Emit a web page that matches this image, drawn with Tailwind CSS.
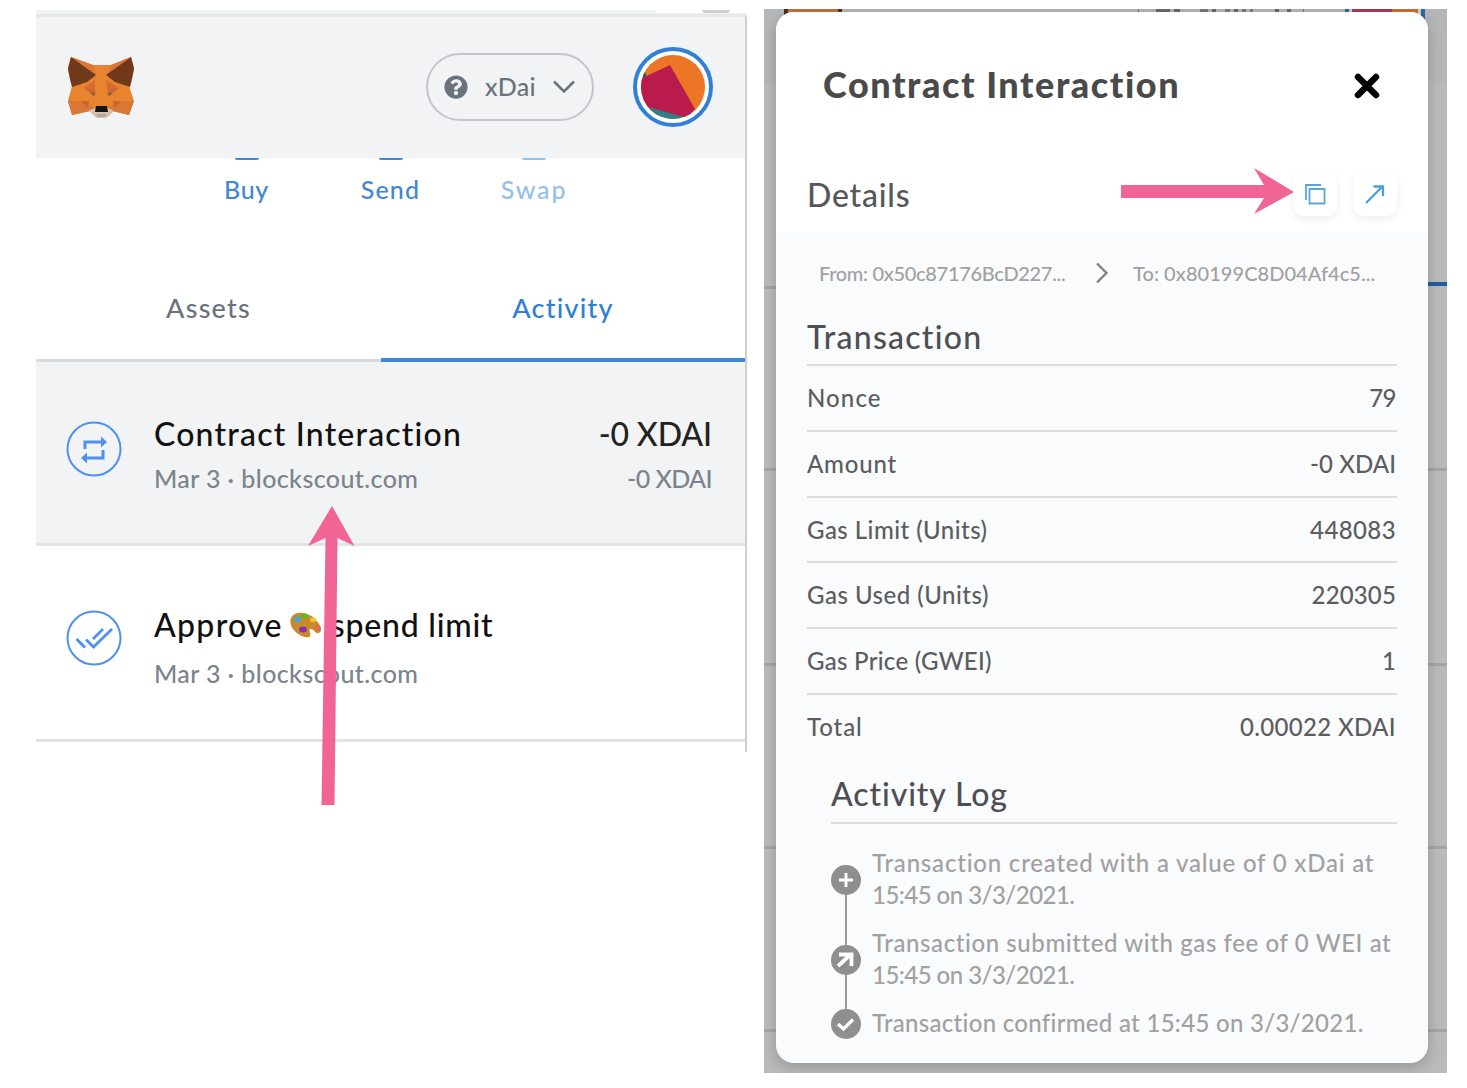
<!DOCTYPE html>
<html lang="en">
<head>
<meta charset="utf-8">
<title>Wallet activity</title>
<script src="https://cdn.jsdelivr.net/npm/@tailwindcss/browser@4"></script>
</head>
<body class="relative flex h-[1088px] w-[1467px] overflow-hidden bg-white font-['Lato','Noto_Sans',sans-serif] whitespace-nowrap">

<!-- Wallet popup -->
<main class="relative mt-[10px] ml-9 h-[742px] w-[711px] shrink-0">
  <div class="flex h-1 w-full bg-[#f1f2f2]"><div class="ml-[620px] h-[3px] w-[91px] overflow-hidden bg-white"><div class="ml-[46px] h-[3px] w-7 rounded-b-full bg-[#cfcfcf]"></div></div></div>
  <div class="h-[3px] w-full bg-[#e6e8e8]"></div>
  <div class="h-[735px] border-r-2 border-[#cfcfd0]">
    <header class="flex h-[141px] items-center bg-[#f2f3f4] pb-[2px] pl-[31px]">
      <svg class="h-[64px] w-[68px]" viewBox="0 0 68 64">
        <path fill="#e8832f" d="M4 2 26 10H44L64 2 67 16 62 31 67 46 62 60 46 56 42 61H28L23 56 5 60 1 46 5 31 1 16Z"/>
        <path fill="#d97735" d="M4 2 26 10 29 20ZM64 2 44 10 40 20ZM1 46H20L28 55 5 60ZM67 46H49L41 55 62 60Z"/>
        <path fill="#70391c" d="M4 2 29 20 20 27 5 32 3 24 1 13ZM64 2 39 20 48 27 63 32 65 24 67 13Z"/>
        <path fill="#d66c31" d="M28 25 17 33 28 40ZM39 25 52 33 41 40Z"/>
        <path fill="#c9652f" d="M17 33 28 36V41ZM52 33 41 36V41ZM14 46H22L20 53ZM54 46H46L48 53Z"/>
        <path fill="#6b6256" d="M23 38H28L27 41ZM46 38H41L42 41Z"/>
        <path fill="#d7c1b3" d="M22 55 29 53H40L46 55 42 61 39 63H30L27 61Z"/>
        <path fill="#b9a595" d="M29 59H40L38 62H31Z"/>
        <path fill="#161616" d="M29 51H40L41 57H28Z"/>
      </svg>
      <div class="ml-[291px] flex h-[68px] w-[168px] items-center rounded-full border-2 border-[#c3c5ca] pl-4">
        <svg class="size-6" viewBox="0 0 512 512"><path fill="#6a737d" d="M504 256c0 137-111 248-248 248S8 393 8 256 119 8 256 8s248 111 248 248zM262.700 90c-54.500 0-89.300 23-116.500 63.800-3.500 5.300-2.400 12.400 2.700 16.300l34.700 26.300c5.200 3.900 12.600 3 16.700-2.100 17.900-22.700 30.100-35.800 57.300-35.800 20.400 0 45.700 13.100 45.700 33 0 15-12.400 22.700-32.500 34C247.100 238.500 216 254.900 216 296v4c0 6.600 5.400 12 12 12h56c6.600 0 12-5.400 12-12v-1.300c0-28.500 83.200-29.600 83.200-106.700 0-58-60.200-102-116.500-102zM256 338c-25.400 0-46 20.600-46 46s20.600 46 46 46 46-20.600 46-46-20.600-46-46-46z"/></svg>
        <span class="ml-[17px] text-[25px] font-medium tracking-[0.300px] text-[#6a737d]">xDai</span>
        <svg class="ml-[17px] h-[14px] w-[22px]" viewBox="0 0 22 14" fill="none" stroke="#6a737d" stroke-width="2.500"><path d="M1 1.500 11 11.500 21 1.500"/></svg>
      </div>
      <svg class="ml-[39px] size-20" viewBox="0 0 80 80">
        <defs><clipPath id="avatar"><circle cx="40" cy="40" r="32"/></clipPath></defs>
        <circle cx="40" cy="40" r="38" fill="#fff" stroke="#2f80d6" stroke-width="4"/>
        <g clip-path="url(#avatar)"><path fill="#ec7625" d="M0 0H80V80H0Z"/><path fill="#235a66" d="M0 20 12 25 14 31 8 32Z"/><path fill="#2f8088" d="M8 58 60 70 44 80H10Z"/><path fill="#b91c4c" d="M5 33 37 18 62 62 54 71 15 60 2 58Z"/></g>
      </svg>
    </header>
    <nav class="flex h-[100px] pl-[138px] text-[25px] leading-[62px] font-medium text-[#4088d4]">
      <div class="relative w-[145px] text-center tracking-[0.700px]"><i class="absolute top-0 left-[61px] h-[2px] w-6 rounded-b-full bg-[#4088d4]"></i>Buy</div>
      <div class="relative w-[143px] text-center tracking-[1.200px]"><i class="absolute top-0 left-[60px] h-[2px] w-6 rounded-b-full bg-[#4088d4]"></i>Send</div>
      <div class="relative w-[144px] text-center tracking-[1.800px] text-[#92c0ea]"><i class="absolute top-0 left-[60px] h-[2px] w-6 rounded-b-full bg-[#92c0ea]"></i>Swap</div>
    </nav>
    <div class="flex h-[104px] text-[27px] leading-[100px] font-medium">
      <div class="w-[345px] border-b-[3px] border-[#d8dade] text-center tracking-[1.200px] text-[#6a737d]">Assets</div>
      <div class="flex-1 border-b-4 border-[#4088d4] text-center tracking-[1.200px] text-[#2f80d2]">Activity</div>
    </div>
    <section class="flex h-[184px] border-b-[3px] border-[#e2e4e5] bg-[#f2f3f4] pr-[33px] pl-[30px]">
      <svg class="mt-[59px] size-14 shrink-0" viewBox="0 0 56 56" fill="none" stroke="#4e8ff0"><circle cx="28" cy="28" r="26.500" stroke-width="2"/><path stroke-width="3" d="M19 28V21H36M37 29V37H20"/><path fill="#4e8ff0" stroke="none" d="M35 15.500 41 21 35 26.500ZM21 31.500 15 37 21 42.500Z"/></svg>
      <div class="mt-[51px] ml-8 flex-1 font-medium">
        <h2 class="text-[32px] leading-[42px] tracking-[1.200px] text-[#111]">Contract Interaction</h2>
        <p class="mt-[2px] text-[25px] leading-[42px] tracking-[0.400px] text-[#7c838d]">Mar 3 · blockscout.com</p>
      </div>
      <div class="mt-[51px] text-right font-medium">
        <p class="text-[32px] leading-[42px] tracking-[-0.100px] text-[#222]">-0 XDAI</p>
        <p class="mt-[2px] text-[25px] leading-[42px] tracking-[-0.600px] text-[#7c838d]">-0 XDAI</p>
      </div>
    </section>
    <section class="flex h-[196px] border-b-[3px] border-[#e2e2e2] pl-[30px]">
      <svg class="mt-[64px] size-14 shrink-0" viewBox="0 0 56 56" fill="none" stroke="#4e8ff0"><circle cx="28" cy="28" r="26.500" stroke-width="2"/><path stroke-width="2.800" d="M10.500 29 19 37.500M20 29.500 27.500 37 46 19M27 29 37 19"/></svg>
      <div class="mt-[58px] ml-8 font-medium">
        <h2 class="flex items-center text-[32px] leading-[42px] text-[#111]"><span class="tracking-[1.300px]">Approve</span>
          <svg class="ml-[6px] h-[28px] w-[33px]" viewBox="0 0 33 28"><path fill="#c98a2c" d="M2 7C6-1 19 1 26 8c6 6 8 12 4 14-4 1-5-4-8-4-4 0 2 6-2 8C13 28-2 17 2 7Z"/><ellipse cx="8.500" cy="8.500" rx="3.500" ry="3" fill="#43a8d8"/><ellipse cx="15.500" cy="5" rx="3.500" ry="2.500" fill="#58bd23"/><ellipse cx="24" cy="9" rx="3" ry="2.500" fill="#edc42b"/><ellipse cx="14" cy="18.500" rx="4" ry="3" fill="#8c30b3"/><ellipse cx="29" cy="17" rx="2.500" ry="3" fill="#ea6350"/></svg>
          <span class="ml-[9px] tracking-[0.780px]">spend limit</span></h2>
        <p class="mt-[6px] text-[25px] leading-[42px] tracking-[0.400px] text-[#7c838d]">Mar 3 · blockscout.com</p>
      </div>
    </section>
  </div>
  <svg class="absolute top-[496px] left-[270px] h-[300px] w-[50px]" viewBox="0 0 50 300"><path fill="#f06595" d="M26 0 48.500 40 31.500 32 28.500 299H15.500L19.500 32 2 40Z"/></svg>
</main>

<!-- Dimmed page with the transaction dialog over it -->
<div class="relative mt-[9px] ml-[17px] h-[1064px] w-[683px] shrink-0 overflow-hidden bg-[#bababa]">
  <div class="absolute inset-x-0 top-0 h-[74px] bg-[#b5b6b7]"></div>
  <div class="absolute top-0 left-5 h-4 w-[58px] border-x-4 border-[#51301b] bg-[#c2733a]"></div>
  <div class="absolute top-0 left-[374px] h-4 w-px bg-[#777]"></div>
  <div class="absolute top-0 left-[392px] flex h-1 gap-1"><i class="h-[3px] w-[14px] bg-[#666a6e]"></i><i class="h-[3px] w-[6px] bg-[#666a6e]"></i><i class="ml-4 h-[3px] w-2 bg-[#777b80]"></i><i class="h-[3px] w-1 bg-[#666a6e]"></i><i class="ml-[5px] h-[3px] w-[5px] bg-[#777b80]"></i><i class="h-[3px] w-1 bg-[#666a6e]"></i><i class="h-[3px] w-1 bg-[#777b80]"></i><i class="h-[3px] w-[3px] bg-[#777b80]"></i><i class="ml-[18px] h-[3px] w-1 bg-[#666a6e]"></i><i class="ml-1 h-[3px] w-1 bg-[#666a6e]"></i></div>
  <div class="absolute top-0 left-[539px] h-4 w-px bg-[#777]"></div>
  <div class="absolute top-0 left-[581px] flex h-5 w-[80px] bg-[#2a68ab]"><i class="ml-1 w-[3px] bg-[#ccc]"></i><i class="w-10 bg-[#a93c58]"></i><i class="w-[26px] bg-[#c7712f]"></i><i class="w-[3px] bg-[#ccc]"></i></div>
  <div class="absolute top-[277px] left-0 h-[3px] w-3 bg-[#a3a4a5]"></div>
  <div class="absolute top-[273px] right-0 h-1 w-5 bg-[#225c9c]"></div>
  <div class="absolute inset-x-0 top-[459px] h-[3px] bg-[#a5a5a5]"></div>
  <div class="absolute inset-x-0 top-[654px] h-[3px] bg-[#a5a5a5]"></div>
  <div class="absolute inset-x-0 top-[837px] h-[3px] bg-[#a5a5a5]"></div>
  <div class="absolute inset-x-0 top-[1020px] h-[3px] bg-[#a5a5a5]"></div>

  <section class="relative mt-[3px] ml-3 h-[1051px] w-[652px] overflow-hidden rounded-[18px] bg-[#fafbfc] shadow-[0_4px_14px_rgba(0,0,0,0.2)]">
    <div class="h-[220px] bg-white">
      <div class="flex h-[144px] items-center justify-between pr-[48px] pl-[47px]">
        <h1 class="text-[36px] font-black tracking-[1.550px] text-[#4a4a4a]">Contract Interaction</h1>
        <svg class="mt-[3px] size-[26px]" viewBox="0 0 26 26" stroke="#000" stroke-width="6.500" stroke-linecap="round"><path d="M4 4 22 22M22 4 4 22"/></svg>
      </div>
      <div class="flex h-[76px] items-start justify-between pr-[31px] pl-[31px]">
        <h2 class="mt-[17px] text-[32px] leading-[44px] font-medium tracking-[0.800px] text-[#55575b]">Details</h2>
        <div class="mt-[16px] flex gap-4">
          <div class="grid size-[44px] place-items-center rounded-[10px] bg-white shadow-[0_3px_8px_rgba(0,0,0,0.07)]"><svg class="size-[22px]" viewBox="0 0 22 22" fill="none" stroke="#5aa5de" stroke-width="1.800"><path d="M5.500 6H20.500V20.500H5.500ZM2 17V2H17"/></svg></div>
          <div class="grid size-[44px] place-items-center rounded-[10px] bg-white shadow-[0_3px_8px_rgba(0,0,0,0.07)]"><svg class="size-[22px]" viewBox="0 0 22 22" fill="none" stroke="#4c9fde" stroke-width="2.300"><path d="M2 20 18 4M9.500 3.500H19V13"/></svg></div>
        </div>
      </div>
    </div>
    <div class="pr-[32px] pl-[31px] text-[24px] font-medium text-[#5b5d60]">
      <div class="flex h-[82px] items-center pl-3 text-[20px] text-[#a0a1a2]">
        <span class="w-[247px] tracking-[-0.320px]">From: 0x50c87176BcD227...</span>
        <svg class="ml-[29px] h-[22px] w-[14px]" viewBox="0 0 14 22" fill="none" stroke="#808285" stroke-width="2.400"><path d="M2 1.500 11.500 11 2 20.500"/></svg>
        <span class="ml-6 tracking-[0.050px]">To: 0x80199C8D04Af4c5...</span>
      </div>
      <h2 class="-mr-px h-[52px] border-b-2 border-[#dadcdd] text-[32px] leading-[46px] tracking-[1.250px] text-[#4d4f53]">Transaction</h2>
      <dl>
        <div class="-mr-px flex h-[66px] items-center justify-between border-b-2 border-[#dadcdd] pr-px"><dt class="tracking-[1.100px]">Nonce</dt><dd class="tracking-[-0.500px]">79</dd></div>
        <div class="-mr-px flex h-[66px] items-center justify-between border-b-2 border-[#dadcdd] pr-px"><dt class="tracking-[0.800px]">Amount</dt><dd class="tracking-[0.050px]">-0 XDAI</dd></div>
        <div class="-mr-px flex h-[65px] items-center justify-between border-b-2 border-[#dadcdd] pr-px"><dt class="tracking-[0.460px]">Gas Limit (Units)</dt><dd class="tracking-[0.400px]">448083</dd></div>
        <div class="-mr-px flex h-[66px] items-center justify-between border-b-2 border-[#dadcdd] pr-px"><dt class="tracking-[0.500px]">Gas Used (Units)</dt><dd class="tracking-[0.150px]">220305</dd></div>
        <div class="-mr-px flex h-[66px] items-center justify-between border-b-2 border-[#dadcdd] pr-px"><dt class="tracking-[0.280px]">Gas Price (GWEI)</dt><dd>1</dd></div>
        <div class="flex h-[63px] items-center justify-between"><dt class="tracking-[0.900px]">Total</dt><dd class="tracking-[0.350px]">0.00022 XDAI</dd></div>
      </dl>
      <div class="pl-6">
        <h2 class="-mr-px mt-[9px] h-[57px] border-b-2 border-[#dadcdd] text-[32px] leading-[54px] tracking-[0.900px] text-[#4d4f53]">Activity Log</h2>
        <div class="relative mt-[23px] leading-8 text-[#a0a1a2]">
          <i class="absolute top-[30px] left-[14px] h-[150px] w-[2px] bg-[#9b9b9b]"></i>
          <div class="flex h-20 gap-[11px]">
            <svg class="relative mt-[18px] size-[30px] shrink-0" viewBox="0 0 30 30"><circle cx="15" cy="15" r="15" fill="#8f8f8f"/><path stroke="#fff" stroke-width="2.800" d="M8 15H22M15 8V22"/></svg>
            <p><span class="tracking-[0.800px]">Transaction created with a value of 0 xDai at</span><br><span class="tracking-[-0.530px]">15:45 on 3/3/2021.</span></p>
          </div>
          <div class="flex h-20 gap-[11px]">
            <svg class="relative mt-[18px] size-[30px] shrink-0" viewBox="0 0 30 30"><circle cx="15" cy="15" r="15" fill="#8f8f8f"/><path fill="none" stroke="#fff" stroke-width="3.800" d="M7 21 18 11M8 9.500H20.500V21"/></svg>
            <p><span class="tracking-[0.590px]">Transaction submitted with gas fee of 0 WEI at</span><br><span class="tracking-[-0.530px]">15:45 on 3/3/2021.</span></p>
          </div>
          <div class="flex gap-[11px]">
            <svg class="relative mt-[2px] size-[30px] shrink-0" viewBox="0 0 30 30"><circle cx="15" cy="15" r="15" fill="#8f8f8f"/><path fill="none" stroke="#fff" stroke-width="3.300" d="M7 15 12.500 20 22 10.500"/></svg>
            <p class="tracking-[0.290px]">Transaction confirmed at 15:45 on 3/3/2021.</p>
          </div>
        </div>
      </div>
    </div>
    <svg class="absolute top-[156px] left-[345px] h-[48px] w-[174px]" viewBox="0 0 174 48"><path fill="#f06595" d="M0 17H143L133 0 173 24 133 46 143 30H0Z"/></svg>
  </section>
</div>
</body>
</html>
